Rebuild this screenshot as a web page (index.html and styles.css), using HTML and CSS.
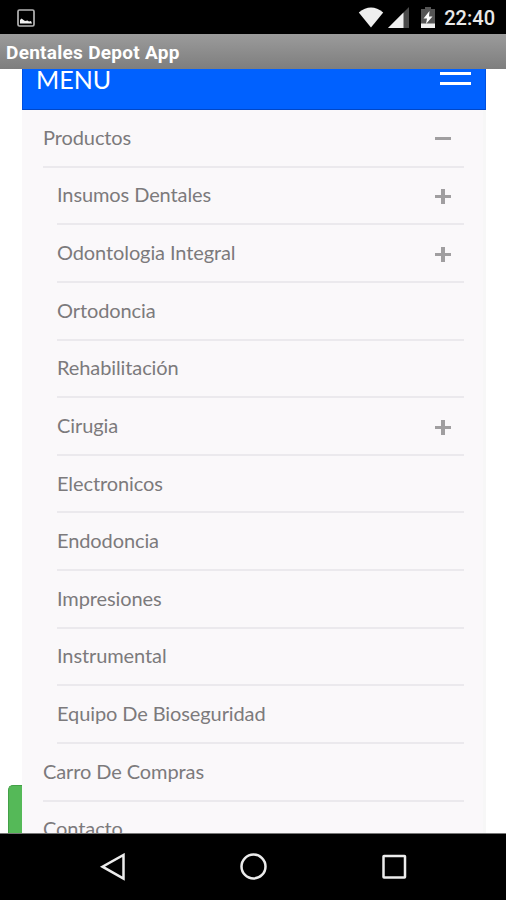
FILE: index.html
```html
<!DOCTYPE html>
<html lang="es">
<head>
  <meta charset="UTF-8">
  <meta name="viewport" content="width=device-width, initial-scale=1.0">
  <title>Dentales Depot App</title>
  <link rel="stylesheet" href="styles.css">
</head>
<body>
  <div id="app">
    <div class="status">
      <svg class="picture" width="18" height="18" viewBox="0 0 18 18">
        <rect x="1" y="1" width="16" height="16" rx="1.5" fill="none" stroke="#b4b4b4" stroke-width="1.7"/>
        <path d="M3 14.5V11l1.500-1.500L6.500 11l1.500 1 2.500-.5 1.500 1 2-.5 1 2.500z" fill="#f2f2f2"/>
      </svg>
      <div class="signals">
        <svg class="wifi" width="26" height="21" viewBox="0 0 26 21">
          <path d="M.8 5.500Q13-4.500 25.200 5.500L13 20.500z" fill="#efefef"/>
        </svg>
        <svg class="cell" width="22" height="21" viewBox="0 0 22 21">
          <path d="M21 0V21H0z" fill="#4a4a4a"/>
          <path d="M15.500 5.500V21H0z" fill="#efefef"/>
        </svg>
        <svg class="battery" width="14" height="21" viewBox="0 0 14 21">
          <path d="M4 0h6v2h4v19H0V2h4z" fill="#555"/>
          <path d="M0 16.500h14V21H0z" fill="#efefef"/>
          <path d="M8.500 4L2.500 11.500h3.500L5 17l6.500-7.500H8z" fill="#fff"/>
        </svg>
        <span class="time">22:40</span>
      </div>
    </div>
    <div class="tit">Dentales Depot App</div>
    <div class="web">
      <i class="green"></i>
      <div class="menu">
        <div class="menu-top">
          <span>MENU</span>
          <i class="bars"></i>
        </div>
        <ul>
          <li>Productos<i class="minus"></i></li>
          <li class="sub">Insumos Dentales<i class="plus"></i></li>
          <li class="sub">Odontologia Integral<i class="plus"></i></li>
          <li class="sub">Ortodoncia</li>
          <li class="sub">Rehabilitación</li>
          <li class="sub">Cirugia<i class="plus"></i></li>
          <li class="sub">Electronicos</li>
          <li class="sub">Endodoncia</li>
          <li class="sub">Impresiones</li>
          <li class="sub">Instrumental</li>
          <li class="sub">Equipo De Bioseguridad</li>
          <li>Carro De Compras</li>
          <li>Contacto</li>
        </ul>
      </div>
    </div>
    <div class="nav">
      <svg width="28" height="28" viewBox="0 0 28 28"><path d="M24.500 2v23.500L3.500 13.700z"/></svg>
      <svg width="28" height="28" viewBox="0 0 28 28"><circle cx="13.500" cy="13.500" r="12"/></svg>
      <svg width="28" height="28" viewBox="0 0 28 28"><rect x="3.500" y="3" width="21.500" height="21.500" rx=".5"/></svg>
    </div>
  </div>
</body>
</html>
```
FILE: styles.css
```css
*{
  margin: 0;
  padding: 0;
  box-sizing: border-box;
}
#app{
  width: 100%;
  height: 900px;
  display: flex;
  flex-direction: column;
  overflow: hidden;
  background-color: #fff;
}
.status{
  height: 34px;
  flex: none;
  display: flex;
  justify-content: space-between;
  padding: 0 11px 0 17px;
  background-color: #000;
}
.status .picture{
  margin-top: 9px;
}
.status .signals{
  display: flex;
}
.status .wifi{
  margin: 7px 4px 0 0;
}
.status .cell{
  margin: 7px 11px 0 0;
}
.status .battery{
  margin: 7px 9px 0 0;
}
.status .time{
  line-height: 37px;
  font-size: 20px;
  font-family: Roboto, sans-serif;
  font-weight: 500;
  color: #e8e8e8;
}
.tit{
  height: 35px;
  flex: none;
  line-height: 37px;
  padding-left: 6px;
  background: linear-gradient(#9b9b9b, #7e7e7e);
  font-size: 19px;
  font-family: Roboto, sans-serif;
  font-weight: 700;
  letter-spacing: .28px;
  color: #fff;
}
.web{
  height: 765px;
  flex: none;
  display: flex;
  overflow: hidden;
  padding-left: 8px;
  border-bottom: 1px solid #777;
}
.web .green{
  width: 14px;
  height: 60px;
  margin-top: 716px;
  flex: none;
  background-color: #55b958;
  border-left: 1px solid #43a047;
  border-top: 1px solid #43a047;
  border-top-left-radius: 5px;
}
.menu{
  width: 464px;
  flex: none;
  font-family: Lato, sans-serif;
}
.menu-top{
  height: 41px;
  display: flex;
  justify-content: space-between;
  padding: 0 14px 0 13px;
  background-color: #0061ff;
  border: 1px solid #0050e0;
  border-top: 0;
  border-bottom: 1px solid #0047c8;
}
.menu-top span{
  line-height: 21px;
  font-size: 25px;
  color: #fff;
}
.menu-top .bars{
  width: 31px;
  height: 13px;
  margin-top: 3px;
  border-top: 3px solid #fff;
  border-bottom: 3px solid #fff;
}
.menu ul{
  height: 730px;
  padding: 0 19px 0 21px;
  list-style: none;
  background-color: #faf8fa;
  border-right: 3px solid #f7f7f7;
}
.menu li{
  height: 57.640px;
  display: flex;
  justify-content: space-between;
  align-items: center;
  padding: 0 13px 2px 0;
  border-bottom: 2px solid #ebe9ed;
  font-size: 20px;
  letter-spacing: -.1px;
  color: #7c7a7c;
}
.menu li.sub{
  margin-left: 14px;
}
.menu .minus{
  width: 16px;
  height: 3px;
  margin-top: 4px;
  background-color: #a09ea0;
}
.menu .plus{
  width: 16px;
  height: 15px;
  margin-top: 5px;
  background: linear-gradient(#a09ea0, #a09ea0) center / 16px 3px no-repeat, linear-gradient(#a09ea0, #a09ea0) center / 4px 15px no-repeat;
}
.nav{
  height: 66px;
  flex: none;
  display: flex;
  justify-content: space-between;
  padding: 19px 98px 0 99px;
  background-color: #000;
}
.nav svg{
  fill: none;
  stroke: #ececec;
  stroke-width: 2.500;
}
```
